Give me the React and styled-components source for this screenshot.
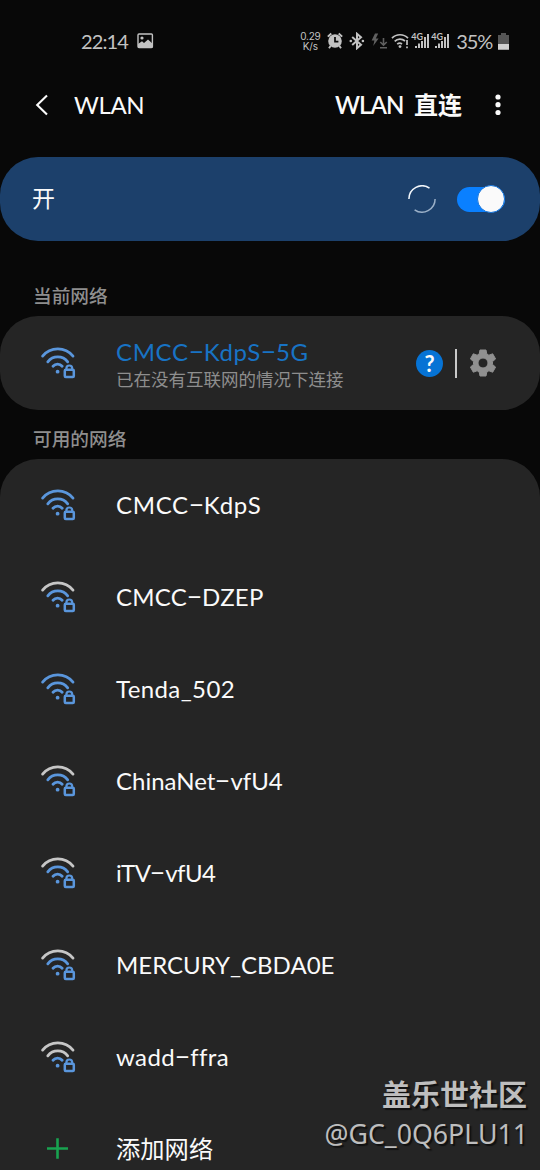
import React from 'react'
import styled, { createGlobalStyle } from 'styled-components'

const networks = [
    { name: 'CMCC-KdpS', level: 3, spacing: 0.7 },
    { name: 'CMCC-DZEP', level: 2, spacing: 0.25 },
    { name: 'Tenda_502', level: 3, spacing: 0.4 },
    { name: 'ChinaNet-vfU4', level: 2, spacing: 0 },
    { name: 'iTV-vfU4', level: 2, spacing: -0.6 },
    { name: 'MERCURY_CBDA0E', level: 2, spacing: 0 },
    { name: 'wadd-ffra', level: 1, spacing: 0.4 },
]

const WifiLock = ({ level }) => {
    const tone = (n) => (level >= n ? '#5a96dc' : '#c6c6c6')
    return (
        <WifiSvg viewBox='0 0 36 32'>
            <path d='M2.6 9.1A19.6 19.6 0 0 1 33 9.1' stroke={tone(3)} />
            <path d='M7.8 14.8A12.5 12.5 0 0 1 27.7 14.8' stroke={tone(2)} />
            <path d='M13 19.2A6.2 6.2 0 0 1 22.2 19.2' stroke={tone(1)} />
            <circle cx='17.6' cy='24.7' r='1.9' fill='#5a96dc' />
            <path d='M26.4 23V21.4a2.9 2.900 0 0 1 5.8 0V23' stroke='#5a96dc' strokeWidth='2.2' />
            <rect x='24.8' y='22.8' width='9' height='7.3' rx='1' stroke='#5a96dc' strokeWidth='2.5' />
        </WifiSvg>
    )
}

const Name = ({ children, ...rest }) => (
    <Ssid {...rest}>
        {children.split('-').map((part, i) => (
            <React.Fragment key={i}>
                {i > 0 && <Dash>-</Dash>}
                {part}
            </React.Fragment>
        ))}
    </Ssid>
)

const Signal = () => (
    <SignalBox>
        <SignalTag>4G</SignalTag>
        <svg width='19' height='18' viewBox='0 0 19 18' fill='#c2c2c2'>
            <rect x='4' y='14' width='2' height='2' />
            <rect x='7' y='11.5' width='2' height='4.5' />
            <rect x='10' y='9' width='2' height='7' />
            <rect x='13' y='5' width='2' height='11' />
            <rect x='16' y='2' width='2' height='14' />
        </svg>
    </SignalBox>
)

const StatusIcons = () => (
    <>
        <svg width='16' height='18' viewBox='0 0 16 18' fill='none' stroke='#c2c2c2'>
            <circle cx='8' cy='9' r='6.8' fill='#c2c2c2' stroke='none' />
            <path d='M0.8 4.600L4.3 1.500M15.2 4.600L11.7 1.500M3.7 13.7L2 16.2M12.3 13.7L14 16.2' strokeWidth='1.9' />
            <path d='M8 5v4.6h3.4' stroke='#080808' strokeWidth='1.7' />
        </svg>
        <svg width='16' height='18' viewBox='0 0 16 18' fill='none' stroke='#c2c2c2' strokeWidth='2'>
            <path d='M3.2 5L12 12.7L8 16.2V1.8L12 5.2L3.2 13' />
            <circle cx='1.8' cy='9' r='1.3' fill='#c2c2c2' stroke='none' />
            <circle cx='13.9' cy='9' r='1.3' fill='#c2c2c2' stroke='none' />
        </svg>
        <svg width='17' height='18' viewBox='0 0 17 18' fill='none' stroke='#606060' strokeWidth='1.6'>
            <path d='M4 1.5L0.6 8.6H3.4L2.200 14L7.6 6.4H4.8L7.2 1.5Z' fill='#606060' stroke='none' />
            <path d='M12.5 6v7M9.3 10l3.2 3.2L15.7 10M9 15.8h7' />
        </svg>
        <WifiStatus viewBox='0 0 18 18'>
            <path d='M1 6.2A11 11 0 0 1 17 6.2M3.7 9.4A7.4 7.4 0 0 1 14 9M6.2 12.2A4 4 0 0 1 11 12' />
            <path d='M16 8v5M16 14.5v1.7' />
            <circle cx='9' cy='14.6' r='1.4' fill='#c2c2c2' stroke='none' />
        </WifiStatus>
    </>
)

const App = () => {
    return (
        <Screen>
            <GlobalStyle />
            <StatusBar>
                <Clock>22:14</Clock>
                <svg width='17' height='16' viewBox='0 0 17 16'>
                    <rect x='1' y='1' width='14.4' height='13.6' rx='1' fill='none' stroke='#c2c2c2' strokeWidth='1.4' />
                    <circle cx='5' cy='5' r='1.6' fill='#c2c2c2' />
                    <path d='M1 11L5 8.3L7 10L11 6.6L15.4 10.5V15H1Z' fill='#c2c2c2' />
                </svg>
                <StatusRight>
                    <Speed>
                        <span>0.29</span>
                        <span>K/s</span>
                    </Speed>
                    <StatusIcons />
                    <Signals>
                        <Signal />
                        <Signal />
                    </Signals>
                    <Percent>35%</Percent>
                    <svg width='11' height='17' viewBox='0 0 11 17'>
                        <path d='M3 0h5v2h3v15H0V2h3z' fill='#555' />
                        <rect y='11' width='11' height='5.6' fill='#cfcfcf' />
                    </svg>
                </StatusRight>
            </StatusBar>
            <Header>
                <svg width='14' height='22' viewBox='0 0 14 22' fill='none' stroke='#fafafa' strokeWidth='2.1'>
                    <path d='M12 1.5L2.2 11L12 20.5' />
                </svg>
                <Title>WLAN</Title>
                <Direct>
                    <DirectLatin>WLAN</DirectLatin>
                    <span>直连</span>
                </Direct>
                <svg width='6' height='22' viewBox='0 0 6 22' fill='#fafafa'>
                    <circle cx='3' cy='3' r='2.6' />
                    <circle cx='3' cy='10.7' r='2.6' />
                    <circle cx='3' cy='18.5' r='2.6' />
                </svg>
            </Header>
            <SwitchBar>
                <SwitchLabel>开</SwitchLabel>
                <svg width='28' height='28' viewBox='0 0 28 28' fill='none' strokeWidth='1.5'>
                    <path d='M0.9 14A13.1 13.1 0 0 1 21.5 3.2' stroke='#f2f6fa' />
                    <path d='M27.1 14A13.1 13.1 0 0 1 6.6 24.8' stroke='#9bb0c8' />
                </svg>
                <Toggle>
                    <Knob />
                </Toggle>
            </SwitchBar>
            <Label $height={75}>当前网络</Label>
            <CurrentCard>
                <WifiLock level={3} />
                <Info>
                    <Name $active $spacing={0.65}>CMCC-KdpS-5G</Name>
                    <Note>已在没有互联网的情况下连接</Note>
                </Info>
                <Help>?</Help>
                <Divider />
                <svg width='26' height='28' viewBox='0 0 26 28' fill='#909090'>
                    <path
                        fillRule='evenodd'
                        stroke='#909090'
                        strokeWidth='1'
                        strokeLinejoin='round'
                        d='M10 1h6l.8 4 2.1 1.2 3.8-1.4 2.9 5.1-3.1 2.7v2.8l3.1 2.7-2.9 5.1-3.8-1.4-2.1 1.2-.8 4h-6l-.8-4-2.1-1.2-3.8 1.4-2.9-5.1 3.1-2.7v-2.8L.4 9.9l2.9-5.1 3.8 1.4L9.2 5zM13 9a5 5 0 1 0 0 10a5 5 0 1 0 0-10z'
                    />
                </svg>
            </CurrentCard>
            <Label $height={49}>可用的网络</Label>
            <List>
                {networks.map((n) => (
                    <Row key={n.name}>
                        <WifiLock level={n.level} />
                        <Name $spacing={n.spacing}>{n.name}</Name>
                    </Row>
                ))}
                <Row>
                    <AddSvg viewBox='0 0 36 32'>
                        <path d='M7 15.500H28M17.500 5.200V25.800' />
                    </AddSvg>
                    <AddText>添加网络</AddText>
                </Row>
            </List>
            <Watermark>
                <Community>盖乐世社区</Community>
                <User>@GC_0Q6PLU11</User>
            </Watermark>
        </Screen>
    )
}

export default App

const GlobalStyle = createGlobalStyle`
body {
    margin: 0;
    background: #080808;
}
* {
    box-sizing: border-box;
}
svg {
    flex: none;
    display: block;
}
`
const Screen = styled.main`
position: relative;
width: 540px;
height: 1170px;
overflow: hidden;
display: flex;
flex-direction: column;
background: #080808;
color: #fafafa;
font-family: Lato, 'Noto Sans CJK SC', sans-serif;
font-variant-ligatures: none;
white-space: nowrap;
`
const StatusBar = styled.div`
height: 64px;
padding: 18px 31px 0 81px;
display: flex;
align-items: center;
flex: none;
color: #c2c2c2;
`
const Clock = styled.div`
width: 56px;
font-size: 20px;
line-height: 24px;
letter-spacing: -0.9px;
`
const StatusRight = styled.div`
margin-left: auto;
display: flex;
align-items: center;
gap: 6px;
`
const Speed = styled.div`
width: 22px;
display: flex;
flex-direction: column;
align-items: center;
font-family: Inter, sans-serif;
font-size: 10px;
line-height: 10px;
letter-spacing: -0.2px;
`
const WifiStatus = styled.svg`
width: 18px;
height: 18px;
margin-left: -3px;
fill: none;
stroke: #c2c2c2;
stroke-width: 1.7px;
`
const Signals = styled.div`
display: flex;
gap: 1px;
margin-left: -4px;
`
const SignalBox = styled.div`
position: relative;
width: 19px;
height: 18px;
`
const SignalTag = styled.span`
position: absolute;
left: 0;
top: 0;
font-size: 9px;
line-height: 9px;
font-weight: 700;
`
const Percent = styled.div`
font-size: 20px;
line-height: 24px;
letter-spacing: -1.2px;
`
const Header = styled.header`
height: 93px;
padding: 0 39px 12px 35px;
display: flex;
align-items: center;
flex: none;
`
const Title = styled.h1`
margin: 0 auto 0 25px;
font-size: 24px;
font-weight: 400;
line-height: 30px;
letter-spacing: -0.4px;
`
const Direct = styled.div`
margin-right: 33px;
display: flex;
gap: 12px;
font-size: 24px;
font-weight: 600;
line-height: 30px;
`
const DirectLatin = styled.span`
width: 67px;
letter-spacing: -1px;
`
const SwitchBar = styled.section`
height: 84px;
border-radius: 38px;
padding: 0 35px 0 32px;
display: flex;
align-items: center;
flex: none;
background: #1c406b;
`
const SwitchLabel = styled.div`
margin-right: auto;
padding-bottom: 2px;
font-size: 23px;
line-height: 30px;
`
const Toggle = styled.div`
width: 48px;
height: 25px;
margin-left: 21px;
border-radius: 13px;
display: flex;
align-items: center;
justify-content: flex-end;
background: #0a80ff;
`
const Knob = styled.div`
width: 28px;
height: 28px;
flex: none;
border: 1px solid #1273dc;
border-radius: 50%;
background: #fafafa;
`
const Label = styled.h2`
height: ${(p) => p.$height}px;
margin: 0;
padding: 0 33px 7px;
display: flex;
align-items: flex-end;
flex: none;
color: #8e8e8e;
font-size: 18.7px;
font-weight: 500;
line-height: 26px;
`
const CurrentCard = styled.section`
height: 94px;
padding: 0 44px 0 40px;
border-radius: 38px;
display: flex;
align-items: center;
flex: none;
background: #252525;
`
const WifiSvg = styled.svg`
width: 36px;
height: 32px;
fill: none;
stroke-width: 2.8px;
stroke-linecap: round;
`
const Info = styled.div`
margin-right: auto;
padding-top: 4px;
display: flex;
flex-direction: column;
`
const Ssid = styled.div`
margin-left: 40px;
font-size: 24px;
line-height: 30px;
letter-spacing: ${(p) => p.$spacing || 0}px;
color: ${(p) => (p.$active ? '#1873c4' : '#fafafa')};
`
const Dash = styled.span`
display: inline-block;
width: 15px;
text-align: center;
letter-spacing: 0;
transform: translateY(-2px) scaleX(1.9);
`
const Note = styled.div`
margin-left: 40px;
color: #8e8e8e;
font-size: 17.5px;
line-height: 26px;
`
const Help = styled.div`
width: 27px;
height: 27px;
border-radius: 50%;
background: #0673d5;
font-size: 22px;
font-weight: 700;
line-height: 27px;
text-align: center;
`
const Divider = styled.div`
width: 2px;
height: 29px;
margin: 0 13px 0 12px;
background: #c9c9c9;
`
const List = styled.section`
flex: 1;
min-height: 0;
overflow: hidden;
border-radius: 38px 38px 0 0;
background: #252525;
`
const Row = styled.div`
height: 92px;
padding-left: 40px;
display: flex;
align-items: center;
`
const AddSvg = styled.svg`
width: 36px;
height: 32px;
fill: none;
stroke: #18a350;
stroke-width: 2.6px;
`
const AddText = styled.div`
margin-left: 40px;
font-size: 24.3px;
line-height: 30px;
`
const Watermark = styled.div`
position: absolute;
right: 13px;
bottom: 17px;
display: flex;
flex-direction: column;
align-items: flex-end;
color: #bebebe;
text-shadow: 2px 2px 1px #111;
`
const Community = styled.div`
font-size: 29px;
font-weight: 700;
line-height: 40px;
`
const User = styled.div`
margin-right: -1px;
font-family: 'Noto Sans', sans-serif;
font-size: 26.7px;
line-height: 38px;
`
